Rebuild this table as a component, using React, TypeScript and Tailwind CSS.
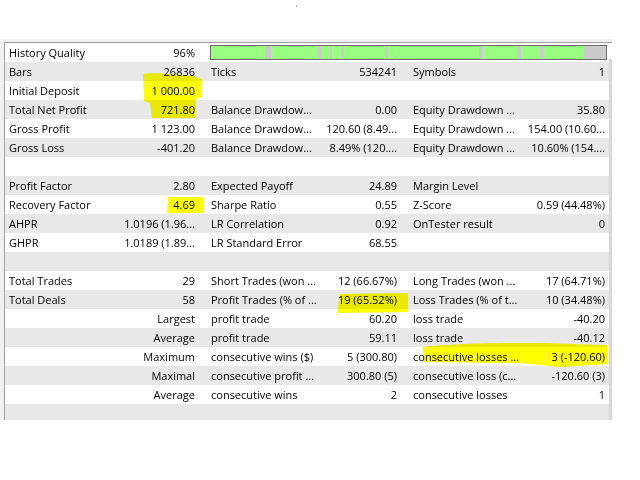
import React from "react";

type Cells = [string, string, string, string, string, string];

const rows: Cells[] = [
  ["Bars", "26836", "Ticks", "534241", "Symbols", "1"],
  ["Initial Deposit", "1 000.00", "", "", "", ""],
  ["Total Net Profit", "721.80", "Balance Drawdow...", "0.00", "Equity Drawdown ...", "35.80"],
  ["Gross Profit", "1 123.00", "Balance Drawdow...", "120.60 (8.49...", "Equity Drawdown ...", "154.00 (10.60..."],
  ["Gross Loss", "-401.20", "Balance Drawdow...", "8.49% (120....", "Equity Drawdown ...", "10.60% (154...."],
  ["", "", "", "", "", ""],
  ["Profit Factor", "2.80", "Expected Payoff", "24.89", "Margin Level", ""],
  ["Recovery Factor", "4.69", "Sharpe Ratio", "0.55", "Z-Score", "0.59 (44.48%)"],
  ["AHPR", "1.0196 (1.96...", "LR Correlation", "0.92", "OnTester result", "0"],
  ["GHPR", "1.0189 (1.89...", "LR Standard Error", "68.55", "", ""],
  ["", "", "", "", "", ""],
  ["Total Trades", "29", "Short Trades (won ...", "12 (66.67%)", "Long Trades (won ...", "17 (64.71%)"],
  ["Total Deals", "58", "Profit Trades (% of ...", "19 (65.52%)", "Loss Trades (% of t...", "10 (34.48%)"],
  ["", "Largest", "profit trade", "60.20", "loss trade", "-40.20"],
  ["", "Average", "profit trade", "59.11", "loss trade", "-40.12"],
  ["", "Maximum", "consecutive wins ($)", "5 (300.80)", "consecutive losses ...", "3 (-120.60)"],
  ["", "Maximal", "consecutive profit ...", "300.80 (5)", "consecutive loss (c...", "-120.60 (3)"],
  ["", "Average", "consecutive wins", "2", "consecutive losses", "1"],
];

const segments: [number, boolean][] = [
  [54, true], [6, false], [47, true], [4, false], [8, true], [2, false],
  [9, true], [3, false], [41, true], [3, false], [91, true], [4, false],
  [34, true], [4, false], [19, true], [4, false], [39, true], [23, false],
];

function Row({ c, grey }: { c: Cells; grey: boolean }) {
  return (
    <div className={`flex h-[19px] items-center whitespace-nowrap ${grey ? "bg-[#e8e8e8]" : "bg-white"}`}>
      <div className="w-[114px] pl-[4px]">{c[0]}</div>
      <div className="w-[92px] pr-[16px] text-right">{c[1]}</div>
      <div className="w-[107px]">{c[2]}</div>
      <div className="w-[95px] pr-[16px] text-right">{c[3]}</div>
      <div className="w-[112px]">{c[4]}</div>
      <div className="w-[84px] pr-[4px] text-right">{c[5]}</div>
    </div>
  );
}

export default function App() {
  return (
    <div
      className="relative w-[640px] h-[480px] bg-white text-[11px] leading-[19px] text-black overflow-hidden"
      style={{ fontFamily: '"Open Sans", "Noto Sans", sans-serif' }}
    >
      <div className="h-[39px] pt-[5px]">
        <div className="ml-[296px] w-px h-[2px] bg-[#b0b0b0]" />
      </div>
      <div className="w-[612px] bg-[#f0f0f0] pt-[3px] pl-[4px]">
        <div className="flex border-l border-t border-[#a0a0a0]">
          <div className="w-[604px] flex flex-col">
            <div className="flex h-[19px] items-center whitespace-nowrap bg-white">
              <div className="w-[114px] pl-[4px]">History Quality</div>
              <div className="w-[92px] pr-[16px] text-right">96%</div>
              <div className="-ml-[1px] flex h-[15px] w-[397px] border border-[#6e6e6e]">
                {segments.map(([w, g], i) => (
                  <div
                    key={i}
                    className={g ? "h-full bg-[#99ff80]" : "h-full bg-[#cbcbcb]"}
                    style={{ width: `${w}px` }}
                  />
                ))}
              </div>
            </div>
            {rows.map((c, i) => (
              <Row key={i} c={c} grey={i % 2 === 0} />
            ))}
            <div className="h-[16px] bg-[#e8e8e8]" />
          </div>
          <div className="w-[3px] flex flex-col">
            <div className="h-[16px] bg-white" />
            <div className="flex-1 bg-[#d8d8d8]" />
          </div>
        </div>
      </div>
      <svg
        className="absolute left-0 top-0 pointer-events-none mix-blend-multiply"
        width="640"
        height="480"
        viewBox="0 0 640 480"
      >
        <g fill="#ffff00">
          <path d="M143 74 C150 72 175 74 192 76 L202 79 L202 97 L196 99 L195 118 L152 118 L150 103 L144 101 Z" />
          <path d="M168 197 L204 197 L204 213 L167 213 Z" />
          <path d="M340 294 L408 293 L408 312 L337 313 Z" />
          <path d="M423 347 C450 344 480 343 540 343 L607 345 L607 364 L560 367 L520 363 L423 362 Z" />
        </g>
      </svg>
    </div>
  );
}
